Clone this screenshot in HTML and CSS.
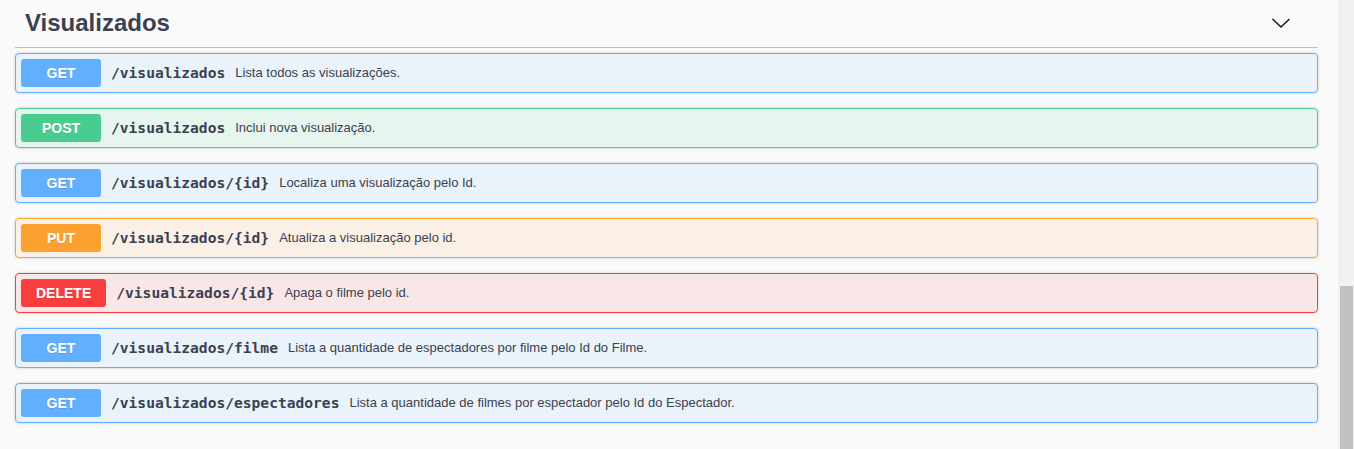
FILE: index.html
```html
<!DOCTYPE html>
<html lang="pt-BR">
<head>
<meta charset="utf-8">
<title>Visualizados</title>
<link rel="stylesheet" href="styles.css">
</head>
<body>
<div class="screen">
  <main class="page">
    <section class="tag-section">
      <h3 class="tag-header">
        <span class="tag-title">Visualizados</span>
        <svg class="chevron" width="20" height="20" viewBox="0 0 20 20" aria-hidden="true">
          <polyline points="1.5,6 10,14 18.5,6" fill="none" stroke="#1b1b1b" stroke-width="1.6"/>
        </svg>
      </h3>
      <div class="ops">
        <div class="op op-get"><span class="method">GET</span><span class="path">/visualizados</span><span class="desc">Lista todos as visualizações.</span></div>
        <div class="op op-post"><span class="method">POST</span><span class="path">/visualizados</span><span class="desc">Inclui nova visualização.</span></div>
        <div class="op op-get"><span class="method">GET</span><span class="path">/visualizados/{id}</span><span class="desc">Localiza uma visualização pelo Id.</span></div>
        <div class="op op-put"><span class="method">PUT</span><span class="path">/visualizados/{id}</span><span class="desc">Atualiza a visualização pelo id.</span></div>
        <div class="op op-delete"><span class="method">DELETE</span><span class="path">/visualizados/{id}</span><span class="desc">Apaga o filme pelo id.</span></div>
        <div class="op op-get"><span class="method">GET</span><span class="path">/visualizados/filme</span><span class="desc">Lista a quantidade de espectadores por filme pelo Id do Filme.</span></div>
        <div class="op op-get"><span class="method">GET</span><span class="path">/visualizados/espectadores</span><span class="desc">Lista a quantidade de filmes por espectador pelo Id do Espectador.</span></div>
      </div>
    </section>
  </main>
  <div class="scrollbar"><div class="thumb"></div></div>
</div>
</body>
</html>
```
FILE: styles.css
```css
html, body {
  margin: 0;
  padding: 0;
  height: 449px;
  overflow: hidden;
  background: #fafafa;
}
.screen {
  display: flex;
  height: 449px;
}
.page {
  flex: 1;
  padding: 0 20px 0 15px;
  font-family: "Liberation Sans", Arial, sans-serif;
  color: #3b4151;
}
.tag-header {
  display: flex;
  align-items: center;
  justify-content: space-between;
  margin: 0 0 5px;
  padding: 9px 27px 10px 10px;
  border-bottom: 1px solid rgba(59, 65, 81, 0.3);
  font-size: 24px;
  font-weight: 700;
  line-height: 27.6px;
  color: #3b4151;
}
.chevron {
  display: block;
  margin-top: 0;
}
.ops {
  display: flex;
  flex-direction: column;
  gap: 15px;
}
.op {
  display: flex;
  align-items: center;
  padding: 5px;
  border: 1px solid;
  border-radius: 4px;
  box-shadow: 0 0 3px rgba(0, 0, 0, 0.19);
}
.method {
  box-sizing: border-box;
  min-width: 80px;
  padding: 6px 15px;
  border-radius: 3px;
  font-size: 14px;
  line-height: 16px;
  font-weight: 700;
  color: #fff;
  text-align: center;
  text-shadow: 0 1px 0 rgba(0, 0, 0, 0.1);
}
.path {
  padding: 0 10px;
  font-family: "DejaVu Sans Mono", "Liberation Mono", monospace;
  font-size: 14.6px;
  font-weight: 700;
  color: #3b4151;
}
.desc {
  font-size: 13px;
  color: #3b4151;
}
.op-get { background: rgba(97, 175, 254, 0.1); border-color: #61affe; }
.op-get .method { background: #61affe; }
.op-post { background: rgba(73, 204, 144, 0.1); border-color: #49cc90; }
.op-post .method { background: #49cc90; }
.op-put { background: rgba(252, 161, 48, 0.1); border-color: #fca130; }
.op-put .method { background: #fca130; }
.op-delete { background: rgba(249, 62, 62, 0.1); border-color: #f93e3e; }
.op-delete .method { background: #f93e3e; }
.scrollbar {
  width: 16px;
  background: #f1f1f1;
  display: flex;
  flex-direction: column;
  align-items: center;
}
.thumb {
  margin-top: 286px;
  width: 13px;
  margin-left: 1px;
  flex: 1;
  background: #c1c1c1;
}
```
